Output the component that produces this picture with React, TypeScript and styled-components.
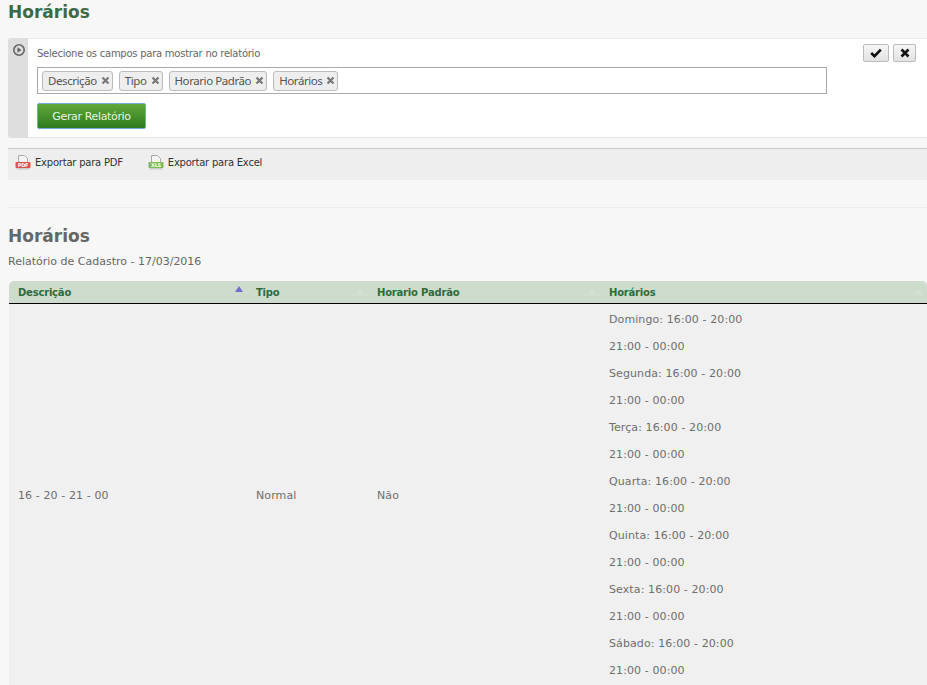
import styled, { createGlobalStyle } from "styled-components";

const font = `"DejaVu Sans", "Noto Sans", sans-serif`;

const GlobalStyle = createGlobalStyle`
  html, body {
    margin: 0;
    padding: 0;
    height: 100%;
    overflow: hidden;
    background: #f7f7f7;
  }
  body {
    font-family: ${font};
    font-size: 11px;
    color: #666;
  }
`;

const Page = styled.div`
  padding: 0 0 0 8px;
`;

const Title = styled.h1`
  margin: 0;
  height: 38px;
  font-size: 17px;
  line-height: 24px;
  font-weight: bold;
  color: #41693f;
`;

const FilterPanel = styled.section`
  display: flex;
  height: 100px;
  background: #dedede;
  border-radius: 3px 0 0 3px;
  padding-left: 20px;
`;

const PanelToggle = styled.button`
  position: absolute;
  left: 12px;
  top: 43px;
  width: 14px;
  height: 14px;
  padding: 0;
  border: 0;
  background: none;
`;

const PanelBody = styled.div`
  flex: 1;
  display: flex;
  justify-content: space-between;
  background: #fff;
  border-top: 1px solid #eee;
  border-bottom: 1px solid #e4e4e4;
  padding: 8px 11px 0 9px;
`;

const FieldColumn = styled.div`
  width: 790px;
`;

const FieldLabel = styled.label`
  display: block;
  font-size: 10px;
  line-height: 14px;
  letter-spacing: -0.25px;
  color: #666;
`;

const TagInput = styled.div`
  display: flex;
  align-items: center;
  gap: 6px;
  height: 25px;
  margin-top: 6px;
  padding: 0 4px;
  background: #fff;
  border: 1px solid #aaa;
`;

const Tag = styled.span`
  display: inline-flex;
  align-items: center;
  gap: 4px;
  height: 18px;
  padding: 0 2px 0 5px;
  background: #eee;
  border: 1px solid #bbb;
  border-radius: 3px;
  font-family: "Noto Sans", sans-serif;
  font-size: 11.5px;
  letter-spacing: -0.42px;
  color: #555;
`;

const GenerateButton = styled.button`
  display: block;
  width: 109px;
  height: 26px;
  margin-top: 9px;
  padding: 0;
  border: 1px solid #6fa8dc;
  border-radius: 2px;
  background: linear-gradient(#5fa83a, #2f7a1f);
  color: #e8f4e0;
  font-family: ${font};
  font-size: 11px;
  letter-spacing: -0.35px;
`;

const ActionGroup = styled.div`
  display: flex;
  gap: 4px;
  margin-top: -3px;
`;

const ActionButton = styled.button<{ $w: number }>`
  display: flex;
  align-items: center;
  justify-content: center;
  width: ${(p) => p.$w}px;
  height: 18px;
  padding: 0;
  background: linear-gradient(#f6f6f6, #e2e2e2);
  border: 1px solid #bbb;
  border-radius: 2px;
  color: #111;
`;

const ExportBar = styled.nav`
  display: flex;
  gap: 25px;
  height: 32px;
  margin-top: 10px;
  padding: 0 0 0 7px;
  background: #eee;
  border-top: 1px solid #ccc;
  box-sizing: border-box;
`;

const ExportLink = styled.a`
  display: flex;
  align-items: center;
  gap: 4px;
  height: 27px;
  font-size: 10px;
  letter-spacing: -0.22px;
  color: #333;
`;

const Divider = styled.hr`
  height: 1px;
  margin: 27px 0 0 0;
  border: 0;
  background: #eee;
`;

const ReportTitle = styled.h2`
  margin: 17px 0 0;
  font-size: 17px;
  line-height: 22px;
  font-weight: bold;
  color: #666;
`;

const ReportSubtitle = styled.p`
  margin: 7px 0 0;
  font-size: 11px;
  line-height: 16px;
  color: #666;
`;

const ReportTable = styled.table`
  width: 918px;
  margin: 11px 0 0 1px;
  border-collapse: separate;
  border-spacing: 0;
  table-layout: fixed;
`;

const HeadCell = styled.th`
  position: relative;
  height: 22px;
  padding: 0 9px;
  text-align: left;
  font-size: 10px;
  font-weight: bold;
  letter-spacing: -0.2px;
  color: #2f6b3f;
  background: #cddccd;
  border-bottom: 1px solid #000;
  &:first-child {
    border-top-left-radius: 5px;
  }
  &:last-child {
    border-top-right-radius: 5px;
  }
`;

const SortArrow = styled.span<{ $active?: boolean }>`
  position: absolute;
  right: 4px;
  top: ${(p) => (p.$active ? "5px" : "8px")};
  width: 0;
  height: 0;
  border-left: 4px solid transparent;
  border-right: 4px solid transparent;
  border-bottom: 6px solid ${(p) => (p.$active ? "#7070d0" : "#d4e0d4")};
`;

const BodyCell = styled.td`
  padding: 2px 9px;
  background: #f0f0f0;
  font-size: 11px;
  letter-spacing: 0.1px;
  color: #6e6e6e;
`;

const ScheduleLine = styled.p`
  margin: 0;
  height: 27px;
  line-height: 27px;
`;

const days = ["Domingo", "Segunda", "Terça", "Quarta", "Quinta", "Sexta", "Sábado"];
const fields = ["Descrição", "Tipo", "Horario Padrão", "Horários"];

const RemoveIcon = () => (
  <svg width="9" height="9" viewBox="0 0 9 9">
    <path d="M1.5 1.5l6 6M7.5 1.5l-6 6" stroke="#777" strokeWidth="2.2" />
  </svg>
);

const PlayIcon = () => (
  <svg width="14" height="14" viewBox="0 0 14 14">
    <circle cx="7" cy="7" r="5.2" fill="none" stroke="#666" strokeWidth="1.6" />
    <path d="M5.4 4.2l4.2 2.8-4.2 2.8z" fill="#666" />
  </svg>
);

const FileIcon = ({ color, label }: { color: string; label: string }) => (
  <svg width="16" height="17" viewBox="0 0 16 17">
    <path d="M3.5 9V1.5h6l3 3V9" fill="#f4f4f4" stroke="#aaa" />
    <rect x="0.5" y="8" width="15" height="6" rx="1" fill={color} />
    <text x="8" y="13" fontSize="5" fontWeight="bold" fill="#fff" textAnchor="middle">
      {label}
    </text>
    <rect x="1.5" y="14" width="13" height="1.5" fill="#ccc" />
  </svg>
);

export default function App() {
  return (
    <Page>
      <GlobalStyle />
      <Title>Horários</Title>

      <FilterPanel>
        <PanelToggle aria-label="Recolher">
          <PlayIcon />
        </PanelToggle>
        <PanelBody>
          <FieldColumn>
            <FieldLabel>Selecione os campos para mostrar no relatório</FieldLabel>
            <TagInput>
              {fields.map((field) => (
                <Tag key={field}>
                  {field}
                  <RemoveIcon />
                </Tag>
              ))}
            </TagInput>
            <GenerateButton>Gerar Relatório</GenerateButton>
          </FieldColumn>
          <ActionGroup>
            <ActionButton $w={26} aria-label="Confirmar">
              <svg width="12" height="10" viewBox="0 0 12 10">
                <path d="M1.2 5l3.3 3.2L10.8 1.6" fill="none" stroke="#111" strokeWidth="2.6" />
              </svg>
            </ActionButton>
            <ActionButton $w={23} aria-label="Cancelar">
              <svg width="10" height="10" viewBox="0 0 10 10">
                <path d="M1.5 1.5l7 7M8.5 1.5l-7 7" fill="none" stroke="#111" strokeWidth="2.6" />
              </svg>
            </ActionButton>
          </ActionGroup>
        </PanelBody>
      </FilterPanel>

      <ExportBar>
        <ExportLink>
          <FileIcon color="#d9534f" label="PDF" />
          Exportar para PDF
        </ExportLink>
        <ExportLink>
          <FileIcon color="#7cb860" label="XLS" />
          Exportar para Excel
        </ExportLink>
      </ExportBar>

      <Divider />

      <ReportTitle>Horários</ReportTitle>
      <ReportSubtitle>Relatório de Cadastro - 17/03/2016</ReportSubtitle>

      <ReportTable>
        <colgroup>
          <col width="238" />
          <col width="121" />
          <col width="232" />
          <col />
        </colgroup>
        <thead>
          <tr>
            <HeadCell>
              Descrição
              <SortArrow $active />
            </HeadCell>
            <HeadCell>
              Tipo
              <SortArrow />
            </HeadCell>
            <HeadCell>
              Horario Padrão
              <SortArrow />
            </HeadCell>
            <HeadCell>
              Horários
              <SortArrow />
            </HeadCell>
          </tr>
        </thead>
        <tbody>
          <tr>
            <BodyCell>16 - 20 - 21 - 00</BodyCell>
            <BodyCell>Normal</BodyCell>
            <BodyCell>Não</BodyCell>
            <BodyCell>
              {days.map((day) => (
                <div key={day}>
                  <ScheduleLine>{day}: 16:00 - 20:00</ScheduleLine>
                  <ScheduleLine>21:00 - 00:00</ScheduleLine>
                </div>
              ))}
            </BodyCell>
          </tr>
        </tbody>
      </ReportTable>
    </Page>
  );
}
